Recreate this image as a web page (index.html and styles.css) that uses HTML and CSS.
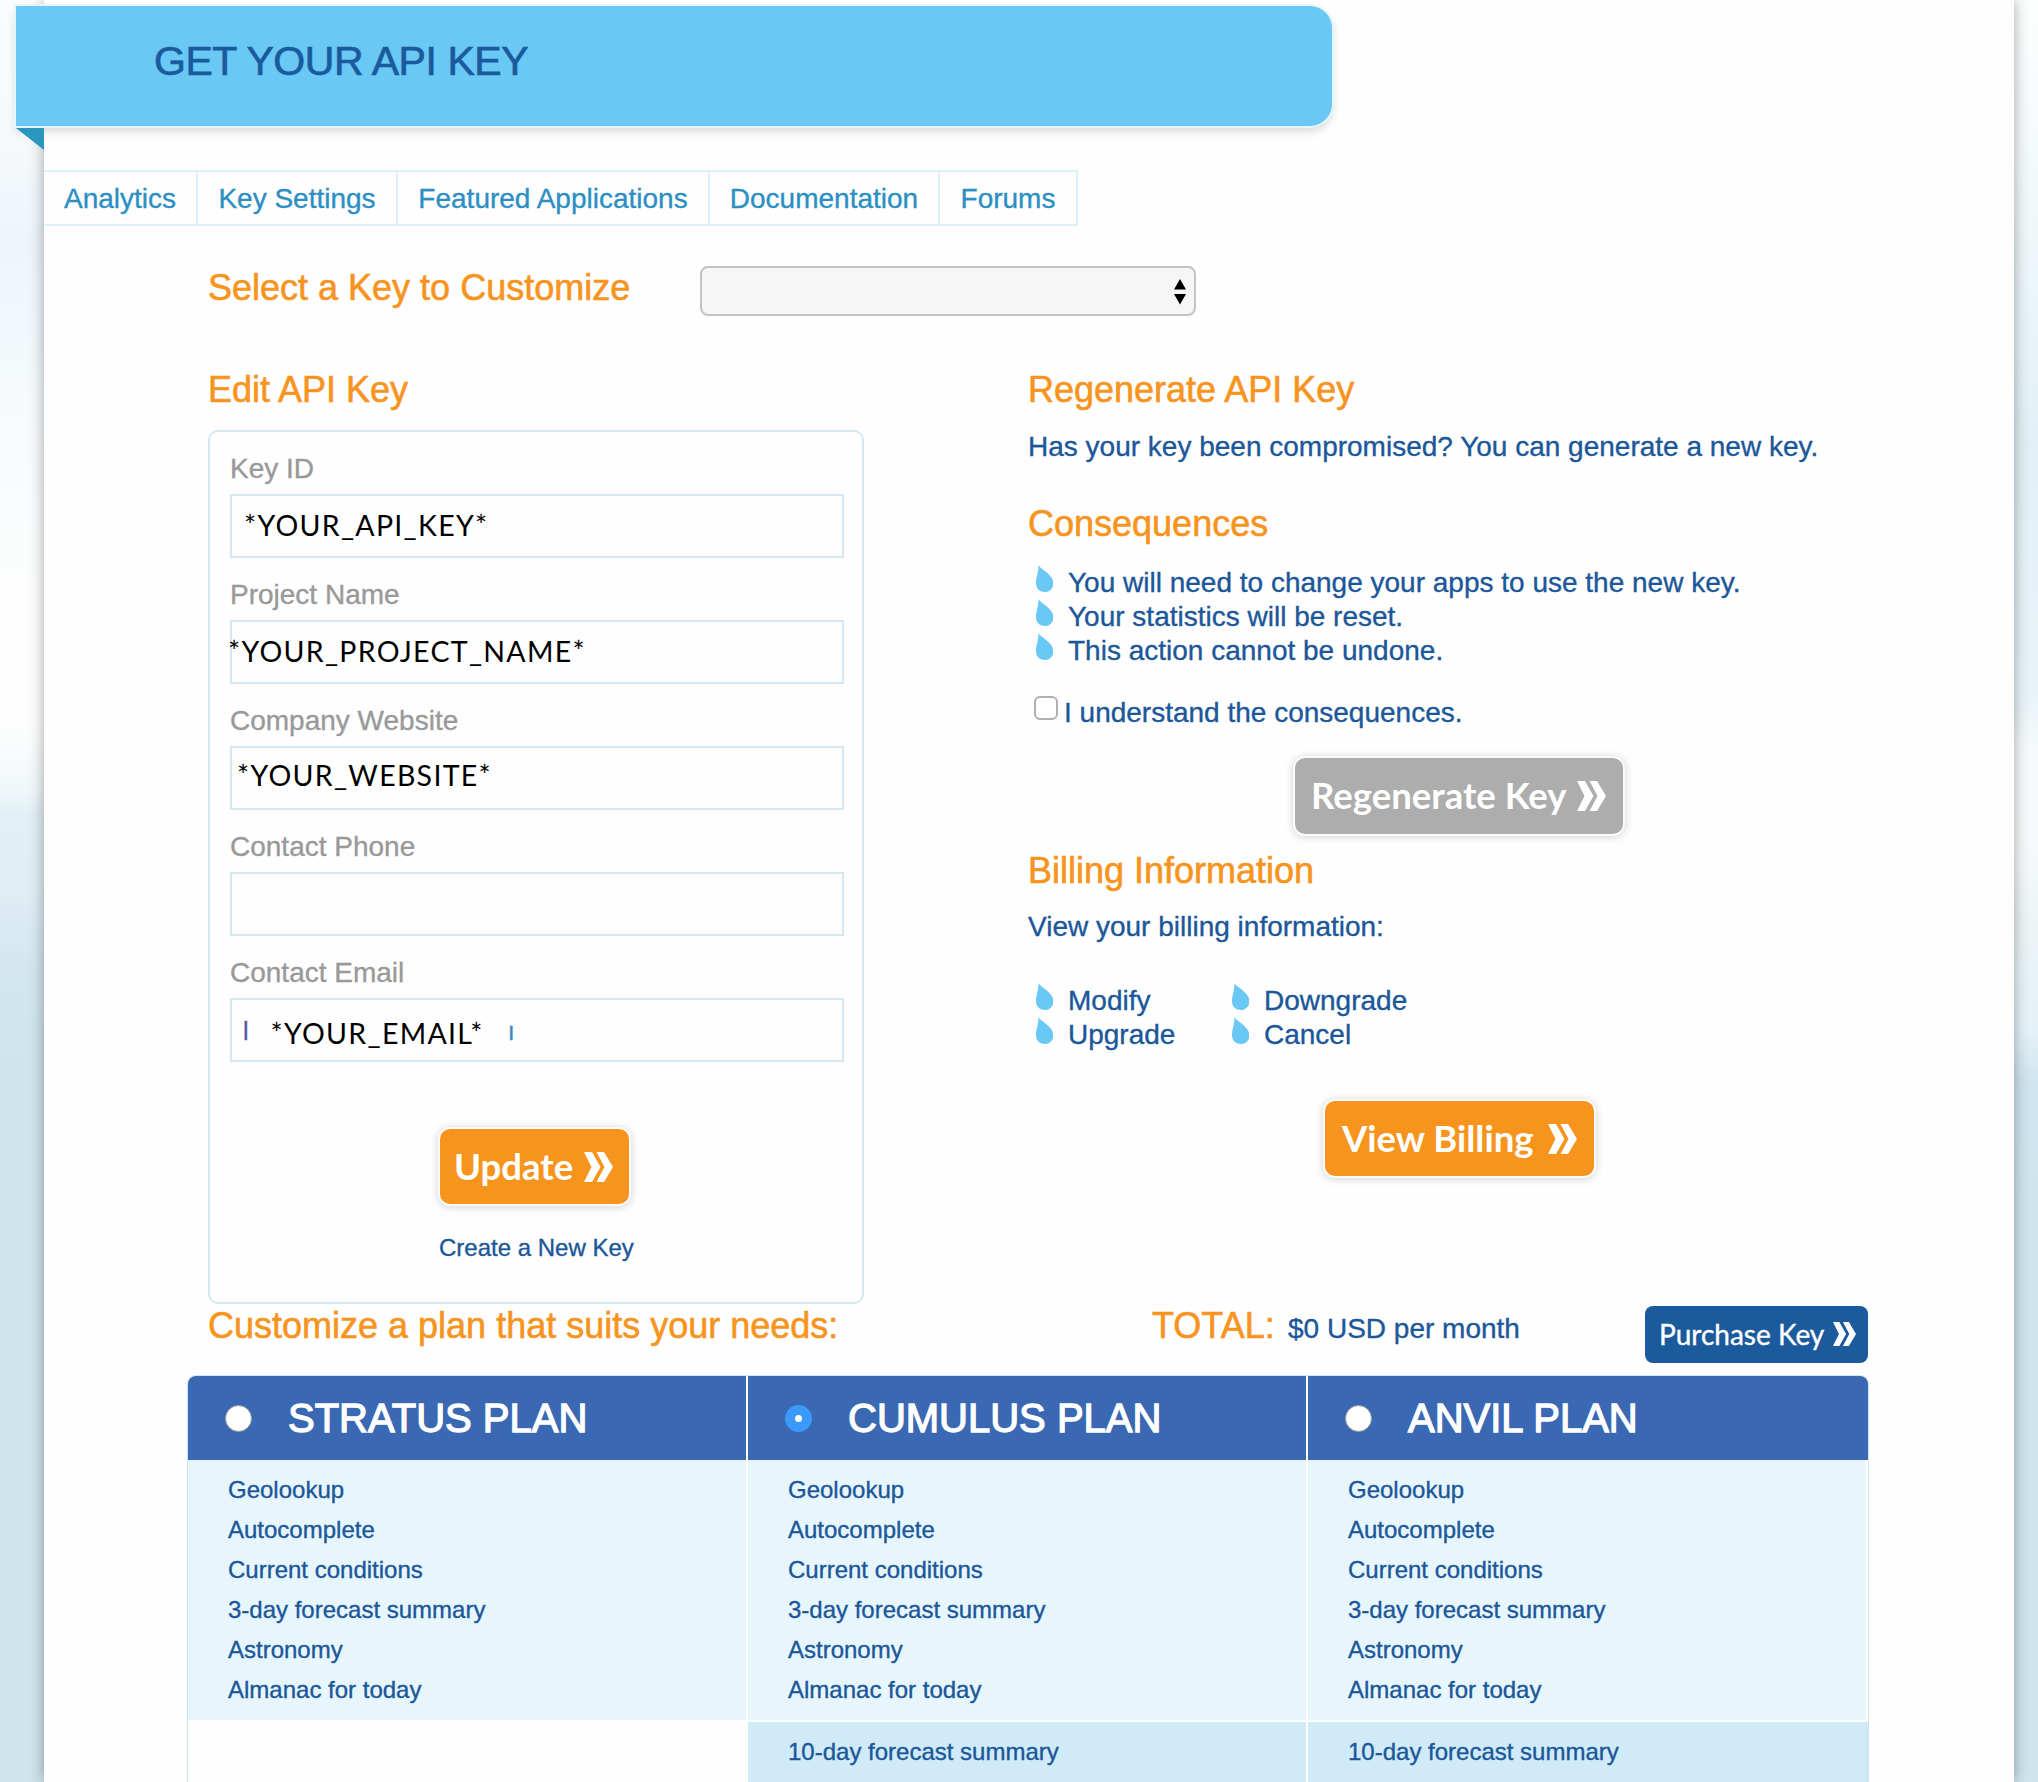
FILE: index.html
```html
<!DOCTYPE html>
<html lang="en">
<head>
<meta charset="utf-8">
<title>Get your API key</title>
<link rel="stylesheet" href="styles.css">
</head>
<body>
<svg class="defs" width="0" height="0" aria-hidden="true">
  <symbol id="chev" viewBox="0 0 29 30"><path d="M0 0h8l8.500 15-8.500 15H0l7.500-15zM12.500 0h7.500l9 15-9 15h-7.500L20.500 15z" fill="#fff"/></symbol>
  <symbol id="drop" viewBox="0 0 17 27"><path d="M2.500 0C4 4 17 9 17.500 18 17.500 24 13 27 9 27 4 27 0 24 0 18 0 12 2.500 8 2.500 0z" fill="#69c8f4"/></symbol>
</svg>
<div class="page">
  <header class="banner"><h1>GET YOUR API KEY</h1></header>
  <nav class="tabs">
    <a class="t1">Analytics</a><a class="t2">Key Settings</a><a class="t3">Featured Applications</a><a class="t4">Documentation</a><a class="t5">Forums</a>
  </nav>
  <div class="choose">
    <h2>Select a Key to Customize</h2>
    <div class="select"><svg width="14" height="26" viewBox="0 0 14 26"><path d="M1 10.500 7 0l6 10.500zM1 15h12L7 25.500z" fill="#000"/></svg></div>
  </div>
  <div class="columns">
    <section class="edit">
      <h2>Edit API Key</h2>
      <form class="card">
        <label>Key ID</label><div class="input"><span class="v v-key">*YOUR_API_KEY*</span></div>
        <label>Project Name</label><div class="input"><span class="v v-project">*YOUR_PROJECT_NAME*</span></div>
        <label>Company Website</label><div class="input"><span class="v v-site">*YOUR_WEBSITE*</span></div>
        <label>Contact Phone</label><div class="input"></div>
        <label>Contact Email</label><div class="input"><span class="rest">l</span><span class="v v-mail">*YOUR_EMAIL*</span><span class="rest end">ı</span></div>
        <a class="btn update">Update<svg><use href="#chev"/></svg></a>
        <a class="create">Create a New Key</a>
      </form>
    </section>
    <section class="side">
      <h2>Regenerate API Key</h2>
      <p class="ask">Has your key been compromised? You can generate a new key.</p>
      <h2 class="cons">Consequences</h2>
      <ul class="drops">
        <li><svg><use href="#drop"/></svg>You will need to change your apps to use the new key.</li>
        <li><svg><use href="#drop"/></svg>Your statistics will be reset.</li>
        <li><svg><use href="#drop"/></svg>This action cannot be undone.</li>
      </ul>
      <div class="agree"><span class="box"></span>I understand the consequences.</div>
      <a class="btn regen">Regenerate Key<svg><use href="#chev"/></svg></a>
      <h2 class="bill">Billing Information</h2>
      <p class="view">View your billing information:</p>
      <ul class="drops two">
        <li><svg><use href="#drop"/></svg>Modify</li>
        <li><svg><use href="#drop"/></svg>Downgrade</li>
        <li><svg><use href="#drop"/></svg>Upgrade</li>
        <li><svg><use href="#drop"/></svg>Cancel</li>
      </ul>
      <a class="btn billing">View Billing<svg><use href="#chev"/></svg></a>
    </section>
  </div>
  <div class="summary">
    <h2>Customize a plan that suits your needs:</h2>
    <h2 class="total">TOTAL:</h2>
    <p class="price">$0 USD per month</p>
    <a class="purchase">Purchase Key<svg><use href="#chev"/></svg></a>
  </div>
  <div class="plans">
    <div class="head"><span class="radio"></span>STRATUS PLAN</div>
    <div class="head"><span class="radio on"></span>CUMULUS PLAN</div>
    <div class="head"><span class="radio"></span>ANVIL PLAN</div>
    <ul class="feat"><li>Geolookup</li><li>Autocomplete</li><li>Current conditions</li><li>3-day forecast summary</li><li>Astronomy</li><li>Almanac for today</li></ul>
    <ul class="feat"><li>Geolookup</li><li>Autocomplete</li><li>Current conditions</li><li>3-day forecast summary</li><li>Astronomy</li><li>Almanac for today</li></ul>
    <ul class="feat last"><li>Geolookup</li><li>Autocomplete</li><li>Current conditions</li><li>3-day forecast summary</li><li>Astronomy</li><li>Almanac for today</li></ul>
    <div></div>
    <ul class="feat more"><li>10-day forecast summary</li></ul>
    <ul class="feat more"><li>10-day forecast summary</li></ul>
  </div>
</div>
</body>
</html>
```
FILE: styles.css
```css
* { box-sizing: border-box; margin: 0; padding: 0; }
body {
  width: 2038px; height: 1782px; overflow: hidden;
  font: 28px/40px "Liberation Sans", Arial, sans-serif; color: #1b5799;
  -webkit-text-stroke: .35px currentColor;
  background:
    linear-gradient(#fafcfd 0, #f7fafc 120px, #eef5fa 240px, #f7fbfd 430px, #fefefe 620px, #fefefe 720px, #f1f7fa 790px, #e2eff6 815px, #e0edf5 890px, #d4e7ef 960px, #cfe4ed 1060px) left / 1000px 100% no-repeat,
    linear-gradient(#fdfefe 0, #f3f9fb 180px, #e2f0f5 440px, #e6f2f7 600px, #e8f3f7 690px, #f6fafb 750px, #f7fafa 840px, #ecf4f6 930px, #e5f1f6 1030px, #d0e5ef 1080px, #cfe4ed 1200px) right / 1038px 100% no-repeat;
}
.defs { position: absolute; }
ul { list-style: none; }
h1, h2 { font-weight: normal; }
h2 { font-size: 36px; line-height: 48px; color: #f7941e; white-space: nowrap; -webkit-text-stroke: .6px currentColor; }
.page {
  width: 1970px; height: 1782px; margin-left: 44px; padding-top: 6px;
  background: #fefefe; box-shadow: 0 0 14px rgba(0, 0, 0, .34);
}
.banner {
  position: relative; width: 1316px; height: 120px; margin-left: -28px; padding: 30px 0 0 138px;
  background: #69c8f4; border-radius: 0 22px 22px 0;
  box-shadow: 0 0 0 2px #e6f5fc, 0 5px 10px rgba(0, 0, 0, .16);
}
.banner::after {
  content: ""; position: absolute; left: 0; top: 122px; width: 28px; height: 22px;
  background: #2996bd; clip-path: polygon(0 0, 100% 0, 100% 100%);
}
h1 { font-size: 41px; line-height: 50px; letter-spacing: -.45px; color: #1b5a9c; -webkit-text-stroke: .7px currentColor; }
.tabs { display: flex; height: 56px; margin-top: 44px; color: #2c8fc3; line-height: 53px; text-align: center; }
.tabs a { border: 2px solid #dcf0f8; border-left: 0; white-space: nowrap; }
.t1 { width: 154px; } .t2 { width: 200px; } .t3 { width: 312px; } .t4 { width: 230px; } .t5 { width: 138px; }
.choose { display: flex; margin: 40px 0 0 164px; height: 50px; }
.choose h2 { width: 492px; line-height: 43px; }
.select {
  width: 496px; height: 50px; border: 2px solid #c3c3c3; border-radius: 8px; background: #f6f6f6;
  display: flex; justify-content: flex-end; padding: 11px 7px 0 0;
}
.columns { display: flex; margin: 50px 0 0 164px; height: 938px; }
.edit { width: 820px; }
.card {
  display: flex; flex-direction: column; width: 656px; height: 874px; margin-top: 16px;
  padding: 17px 18px 0 20px; border: 2px solid #d3e8f1; border-radius: 10px;
}
.card label { color: #999; margin-bottom: 5px; }
.input { display: flex; width: 614px; height: 64px; border: 2px solid #d3e8f1; margin-bottom: 17px; line-height: 60px; }
.v { font-family: Lato, sans-serif; font-size: 28.500px; line-height: 60px; letter-spacing: 1.3px; color: #000; white-space: nowrap; -webkit-text-stroke: 0; }
.v-key { margin: -1px 0 0 12px; }
.v-project { margin: -1px 0 0 -4px; }
.v-site { margin: -3px 0 0 5px; }
.v-mail { margin: 3px 0 0 22px; }
.rest { font-size: 25px; margin: 1px 0 0 11px; color: #5b5a9e; }
.end { margin-left: 24px; color: #3a8ac4; }
.btn {
  display: flex; align-items: center; color: #fff; white-space: nowrap; -webkit-text-stroke: 0;
  font: bold 36.500px/44px Lato, sans-serif; border-radius: 10px; background: #f7941e;
  box-shadow: 0 0 0 2px #fbfbfb, 0 1px 8px 2px rgba(0, 0, 0, .18);
}
.btn svg { width: 29px; height: 30px; margin: 2px 0 0 auto; }
.update { width: 189px; height: 75px; margin: 50px 0 0 210px; padding: 0 16px 2px 14px; }
.create { font-size: 24px; line-height: 32px; margin: 28px 0 0 209px; }
.side { width: 840px; }
.side p { white-space: nowrap; }
.ask { margin-top: 13px; }
.cons { margin-top: 33px; }
.drops { margin-top: 18px; }
.drops li { display: flex; line-height: 34px; height: 34px; white-space: nowrap; }
.drops svg { width: 17px; height: 27px; margin: -1px 15px 0 8px; }
.agree { display: flex; margin-top: 25px; }
.box { width: 24px; height: 24px; margin: 3px 6px 0 6px; border: 2px solid #b0b0b0; border-radius: 6px; background: #fff; }
.regen { width: 328px; height: 76px; margin: 25px 0 0 267px; padding: 0 17px 2px 16px; background: #adadad; }
.bill { margin-top: 13px; }
.view { margin-top: 12px; }
.two { display: grid; grid-template-columns: 196px 300px; margin-top: 37px; }
.billing { width: 269px; height: 75px; margin: 49px 0 0 297px; padding: 0 17px 2px 17px; }
.summary { display: flex; height: 71px; margin-left: 164px; }
.summary h2 { width: 944px; line-height: 44px; }
.summary .total { width: 136px; }
.price { width: 357px; line-height: 49px; }
.purchase {
  display: flex; align-items: center; width: 223px; height: 57px; margin-top: 2px; padding: 0 12px 2px 14px;
  border-radius: 8px; background: #1b5a9c; color: #fff; font: 28px/36px Lato, sans-serif; white-space: nowrap;
}
.purchase svg { width: 23px; height: 24px; margin-left: auto; }
.plans {
  display: grid; grid-template-columns: 558px 558px 560px; grid-template-rows: 84px 260px 80px; column-gap: 2px;
  width: 1682px; margin-left: 143px; border: 1px solid #cbe6f0; border-radius: 9px 9px 0 0; overflow: hidden;
}
.head {
  display: flex; align-items: center; padding-left: 37px; background: #3a68b2; color: #fff;
  font-size: 40px; line-height: 84px; -webkit-text-stroke: 1.3px #fff; white-space: nowrap;
}
.radio { width: 27px; height: 27px; margin-right: 36px; border-radius: 50%; background: #fff; border: 1px solid #999; }
.radio.on { border: 10px solid #3b99fc; }
.feat { padding: 10px 0 0 40px; background: #e7f6fc; font-size: 24px; }
.last { border-right: 2px solid #fff; }
.more { background: #d0ebf7; border-top: 2px solid #fefefe; }
```
